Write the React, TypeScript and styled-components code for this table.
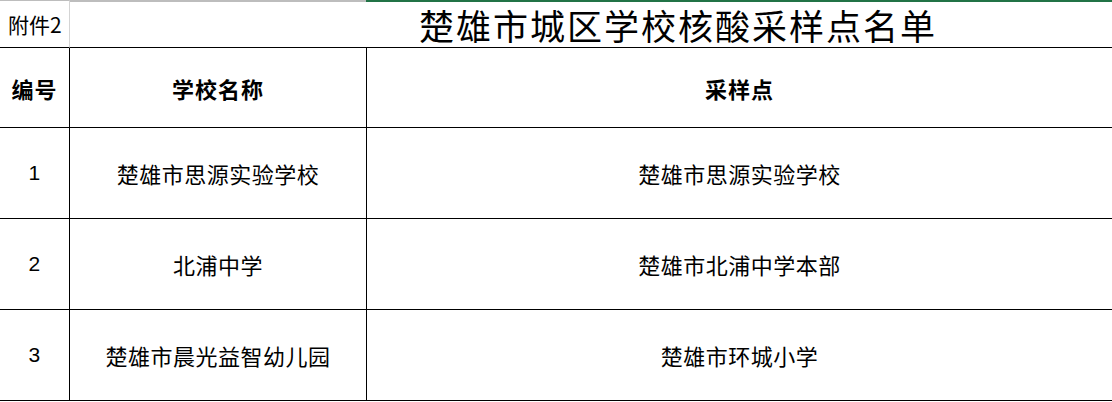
import React from "react";
import styled, { createGlobalStyle } from "styled-components";

interface SiteRow {
  no: string;
  school: string;
  site: string;
}

const rows: SiteRow[] = [
  { no: "1", school: "楚雄市思源实验学校", site: "楚雄市思源实验学校" },
  { no: "2", school: "北浦中学", site: "楚雄市北浦中学本部" },
  { no: "3", school: "楚雄市晨光益智幼儿园", site: "楚雄市环城小学" },
];

const GlobalStyle = createGlobalStyle`
  html, body {
    margin: 0;
    padding: 0;
    background: #ffffff;
    overflow: hidden;
  }
  body {
    font-family: "Noto Sans CJK SC", "Liberation Sans", sans-serif;
    color: #000000;
  }
`;

const App: React.FC = () => {
  return (
    <>
      <GlobalStyle />
      <Sheet>
        <NoteCell>附件2</NoteCell>
        <TitleCell>楚雄市城区学校核酸采样点名单</TitleCell>

        <HeadCell divider>编号</HeadCell>
        <HeadCell divider>学校名称</HeadCell>
        <HeadCell>采样点</HeadCell>

        {rows.map((row) => (
          <React.Fragment key={row.no}>
            <BodyCell divider>
              <Num>{row.no}</Num>
            </BodyCell>
            <BodyCell divider>{row.school}</BodyCell>
            <BodyCell>{row.site}</BodyCell>
          </React.Fragment>
        ))}
      </Sheet>
    </>
  );
};

export default App;

const Sheet = styled.div`
  width: 1112px;
  display: grid;
  grid-template-columns: 70px 297px 1fr;
  grid-template-rows: 48px 80px 91px 91px 91px;
`;

const NoteCell = styled.div`
  display: flex;
  align-items: center;
  padding-left: 8px;
  border-top: 1px solid #bdbdbd;
  border-right: 1px solid #d4d4d4;
  border-bottom: 1px solid #000000;
  font-size: 21px;
  letter-spacing: 0;
`;

const TitleCell = styled.div`
  grid-column: 2 / span 2;
  display: flex;
  align-items: center;
  padding-left: 349px;
  padding-top: 2px;
  border-bottom: 1px solid #000000;
  background: linear-gradient(to right, #bdbdbd 296px, #217346 296px) top /
      100% 2px no-repeat,
    #ffffff;
  font-size: 35px;
  letter-spacing: 2px;
  white-space: nowrap;
`;

const Cell = styled.div<{ divider?: boolean }>`
  display: flex;
  align-items: center;
  justify-content: center;
  border-bottom: 1px solid #000000;
  border-right: ${(p) => (p.divider ? "1px solid #000000" : "none")};
  white-space: nowrap;
`;

const HeadCell = styled(Cell)`
  font-size: 22px;
  font-weight: 700;
  letter-spacing: 1px;
`;

const BodyCell = styled(Cell)`
  font-size: 22px;
  letter-spacing: 0.5px;
`;

const Num = styled.span`
  font-family: "Liberation Sans", sans-serif;
  font-size: 21px;
`;
